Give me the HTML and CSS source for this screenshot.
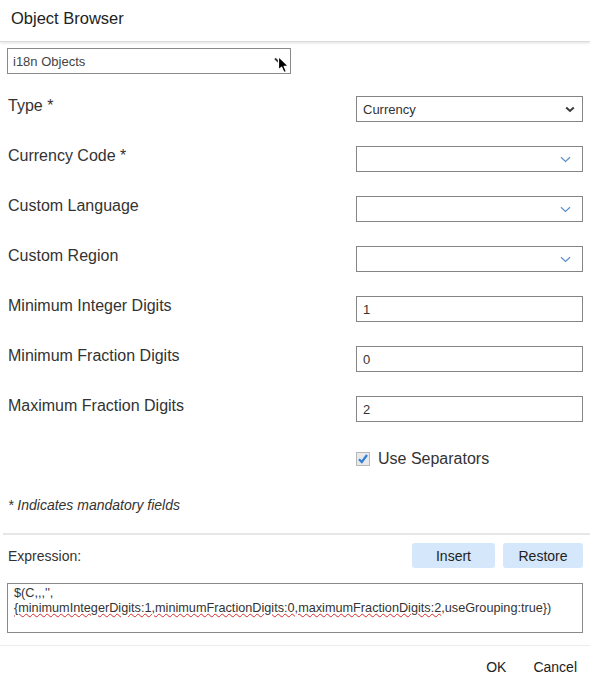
FILE: index.html
```html
<!DOCTYPE html>
<html>
<head>
<meta charset="utf-8">
<link rel="stylesheet" href="styles.css">
</head>
<body>
<div class="dialog">
  <div class="header">Object Browser</div>
  <div class="main">
    <div class="top-select">
      <span>i18n Objects</span>
      <svg class="chev-dark small" width="8" height="6" viewBox="0 0 8 6"><path d="M1 1.5 L4 4.5 L7 1.5" fill="none" stroke="#333" stroke-width="1.8"/></svg>
      <svg class="cursor" width="14" height="20" viewBox="0 0 14 20"><path d="M1.5 1.5 L1.5 15 L4.6 12.2 L7 17.6 L9.4 16.5 L7.1 11.3 L11.3 11.1 Z" fill="#000" stroke="#fff" stroke-width="1.2" stroke-linejoin="round"/></svg>
    </div>

    <div class="form">
      <div class="label">Type *</div>
      <div class="field select">
        <span>Currency</span>
        <svg class="chev-dark" width="10" height="7" viewBox="0 0 10 7"><path d="M1.2 1.5 L5 5 L8.8 1.5" fill="none" stroke="#3a3a3a" stroke-width="2"/></svg>
      </div>

      <div class="label">Currency Code *</div>
      <div class="field select">
        <span></span>
        <svg class="chev-blue" width="11" height="7" viewBox="0 0 11 7"><path d="M1 1.2 L5.5 5.5 L10 1.2" fill="none" stroke="#5b8fcc" stroke-width="1.2"/></svg>
      </div>

      <div class="label">Custom Language</div>
      <div class="field select">
        <span></span>
        <svg class="chev-blue" width="11" height="7" viewBox="0 0 11 7"><path d="M1 1.2 L5.5 5.5 L10 1.2" fill="none" stroke="#5b8fcc" stroke-width="1.2"/></svg>
      </div>

      <div class="label">Custom Region</div>
      <div class="field select">
        <span></span>
        <svg class="chev-blue" width="11" height="7" viewBox="0 0 11 7"><path d="M1 1.2 L5.5 5.5 L10 1.2" fill="none" stroke="#5b8fcc" stroke-width="1.2"/></svg>
      </div>

      <div class="label">Minimum Integer Digits</div>
      <div class="field"><span>1</span></div>

      <div class="label">Minimum Fraction Digits</div>
      <div class="field"><span>0</span></div>

      <div class="label">Maximum Fraction Digits</div>
      <div class="field"><span>2</span></div>

      <div class="label"></div>
      <div class="check-row">
        <svg class="checkbox" width="14" height="14" viewBox="0 0 14 14"><rect x="0.5" y="0.5" width="13" height="13" fill="#e9e9e9" stroke="#b8b8b8"/><path d="M3 7.2 L5.8 10 L11 3" fill="none" stroke="#2f7fd6" stroke-width="2.2"/></svg>
        <span>Use Separators</span>
      </div>
    </div>

    <div class="mandatory">* Indicates mandatory fields</div>
  </div>

  <div class="divider"></div>

  <div class="main">
    <div class="expr-row">
      <span class="expr-label">Expression:</span>
      <div class="buttons">
        <button class="btn btn-insert">Insert</button>
        <button class="btn btn-restore">Restore</button>
      </div>
    </div>
    <div class="expr-box">$(C,,,'', <span class="spell">{minimumIntegerDigits:1,minimumFractionDigits:0,maximumFractionDigits:2</span>,useGrouping:true})</div>
  </div>

  <div class="footer">
    <span class="ok">OK</span>
    <span class="cancel">Cancel</span>
  </div>
</div>
</body>
</html>
```

FILE: styles.css
```css
html, body {
  margin: 0;
  padding: 0;
  background: #fff;
}
body {
  font-family: "Liberation Sans", Arial, sans-serif;
  color: #333;
}
.dialog {
  width: 590px;
  height: 681px;
  overflow: hidden;
}
.header {
  box-sizing: border-box;
  height: 42px;
  padding: 8px 11px 0;
  font-size: 16.5px;
  line-height: 20px;
  color: #222;
  border-bottom: 1px solid #dcdcdc;
  box-shadow: 0 1px 3px rgba(0, 0, 0, 0.13);
}
.main {
  padding: 6px 7px 0;
}
.top-select {
  position: relative;
  box-sizing: border-box;
  width: 284px;
  height: 26px;
  border: 1px solid #8a8a8a;
  display: flex;
  align-items: center;
  justify-content: space-between;
  padding: 0 8px 0 5px;
  font-size: 13px;
  color: #444;
}
.chev-dark.small {
  margin-top: -3px;
}
.cursor {
  position: absolute;
  right: -1px;
  top: 6px;
}
.form {
  margin-top: 22px;
  display: grid;
  grid-template-columns: 1fr 227px;
  row-gap: 24px;
}
.label {
  padding-left: 1px;
  font-size: 16px;
  line-height: 20px;
  color: #333;
}
.field {
  box-sizing: border-box;
  height: 26px;
  border: 1px solid #858585;
  display: flex;
  align-items: center;
  justify-content: space-between;
  padding: 0 8px 0 6px;
  font-size: 13px;
  color: #333;
}
.field.select {
  padding-right: 7px;
}
.chev-blue {
  margin-right: 4px;
}
.check-row {
  height: 26px;
  display: flex;
  align-items: center;
  gap: 8px;
  font-size: 16px;
  color: #333;
}
.mandatory {
  margin-top: 25px;
  padding-left: 1px;
  font-size: 14px;
  line-height: 16px;
  font-style: italic;
  color: #333;
}
.divider {
  margin: 20px 0 0 3px;
  height: 2px;
  background: #e6e6e6;
}
.main + .divider + .main {
  padding-top: 8px;
}
.expr-row {
  display: flex;
  align-items: center;
  justify-content: space-between;
  height: 25px;
}
.expr-label {
  padding-left: 1px;
  font-size: 14px;
  color: #333;
}
.buttons {
  display: flex;
  gap: 8px;
}
.btn {
  height: 25px;
  border: none;
  border-radius: 3px;
  background: #d4e7fb;
  font-family: "Liberation Sans", Arial, sans-serif;
  font-size: 14px;
  color: #222;
  padding: 0;
}
.btn-insert {
  width: 83px;
}
.btn-restore {
  width: 80px;
}
.expr-box {
  box-sizing: border-box;
  margin-top: 15px;
  height: 50px;
  border: 1px solid #8a8a8a;
  padding: 2px 6px;
  font-size: 12.7px;
  line-height: 15px;
  color: #333;
}
.spell {
  text-decoration: underline wavy #d42a2a;
  text-decoration-thickness: 1px;
  text-underline-offset: 1px;
}
.footer {
  margin-top: 12px;
  border-top: 1px solid #ececec;
  height: 40px;
  display: flex;
  align-items: center;
  justify-content: flex-end;
  gap: 27px;
  padding-right: 13px;
  padding-top: 1px;
  font-size: 14px;
  color: #222;
}
```
